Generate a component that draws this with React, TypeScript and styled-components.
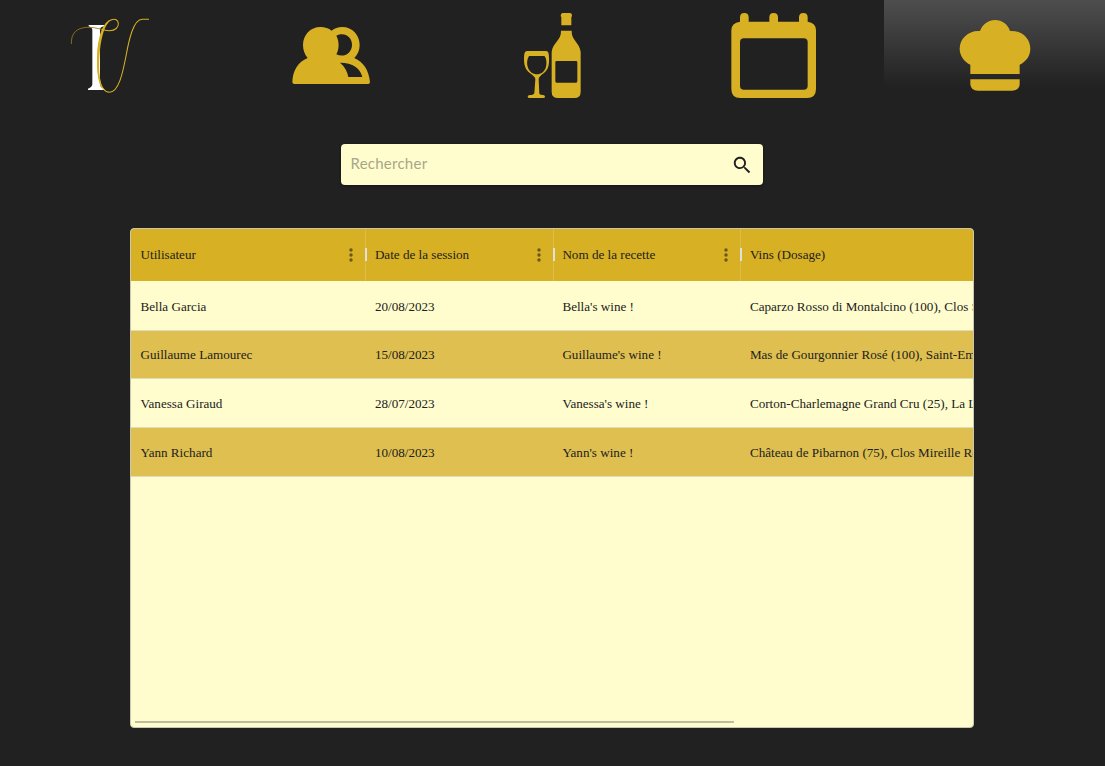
import React from "react";
import styled, { createGlobalStyle } from "styled-components";

const GOLD = "#d8b023";
const CREAM = "#fffdce";
const DARK = "#212121";

const GlobalStyle = createGlobalStyle`
  * { box-sizing: border-box; }
  body { margin: 0; background: ${DARK}; overflow: hidden; }
`;

const Page = styled.div`
  width: 100%;
  height: 766px;
  display: flex;
  flex-direction: column;
  align-items: center;
  background: ${DARK};
  font-family: "Liberation Serif", "Times New Roman", serif;
`;

const Nav = styled.nav`
  width: 100%;
  height: 110px;
  display: grid;
  grid-template-columns: repeat(5, 1fr);
`;

const NavItem = styled.a<{ $active?: boolean }>`
  display: flex;
  align-items: flex-start;
  justify-content: center;
  padding-top: 5px;
  padding-right: 1px;
  background: ${(p) => (p.$active ? `linear-gradient(180deg, #4e4e4e 0, ${DARK} 87px)` : "none")};
`;

const NavIcon = styled.svg`
  width: 100px;
  height: 100px;
  fill: ${GOLD};
`;

const SearchBox = styled.div`
  width: 422px;
  height: 41px;
  margin-top: 34.4px;
  margin-right: 1px;
  padding: 0 12px 0 9.5px;
  display: flex;
  align-items: center;
  justify-content: space-between;
  background: ${CREAM};
  border-radius: 4px;
  box-shadow: 0 1px 3px rgba(0, 0, 0, 0.4);
`;

const SearchInput = styled.input`
  flex: 1;
  min-width: 0;
  padding: 0 0 3px;
  border: 0;
  outline: 0;
  background: transparent;
  font: 400 15px Lato, sans-serif;
  letter-spacing: 0.25px;
  &::placeholder { color: #a9a688; opacity: 1; }
`;

const SearchIcon = styled.svg`
  width: 22.5px;
  height: 22.5px;
  margin-right: -2px;
  fill: ${DARK};
`;

const Grid = styled.section`
  width: 843.75px;
  height: 500px;
  margin-top: 42.6px;
  margin-right: 1px;
  display: flex;
  flex-direction: column;
  border: 1px solid #c9c6b4;
  border-radius: 4px;
  overflow: hidden;
  background: ${CREAM};
  color: ${DARK};
  font-size: 13.125px;
`;

const Row = styled.div<{ $header?: boolean; $tinted?: boolean }>`
  width: 1030px;
  flex: none;
  height: ${(p) => (p.$header ? "52px" : "48.75px")};
  margin-bottom: ${(p) => (p.$header ? "0.8px" : "0")};
  display: grid;
  grid-template-columns: 234.375px 187.5px 187.5px 420px;
  background: ${(p) => (p.$header ? GOLD : p.$tinted ? "#dfbf4f" : CREAM)};
  border-bottom: ${(p) => (p.$header ? "0" : "1px solid #e0dbb9")};
`;

const Cell = styled.div`
  padding: 2px 9.4px 0;
  display: flex;
  align-items: center;
  white-space: nowrap;
`;

const HeaderCell = styled(Cell)<{ $divided?: boolean }>`
  justify-content: space-between;
  padding: 0 0 0 9.4px;
  margin-right: -0.6px;
  border-right: ${(p) => (p.$divided ? "1px solid #dfbd4b" : "0")};
`;

const HeaderTools = styled.span`
  display: flex;
  align-items: center;
  gap: 12px;
  margin-right: -2px;
`;

const Dots = styled.svg`
  width: 4px;
  height: 14px;
  fill: #6a5618;
`;

const Separator = styled.span`
  width: 2px;
  height: 13px;
  background: #e0e0e0;
`;

const Filler = styled.div`
  flex: 1;
`;

const ScrollThumb = styled.div`
  width: 599px;
  height: 2px;
  flex: none;
  margin: 0 0 4px 4px;
  background: #bfbd9d;
`;

const headers = ["Utilisateur", "Date de la session", "Nom de la recette", "Vins (Dosage)"];

const sessions = [
  ["Bella Garcia", "20/08/2023", "Bella's wine !", "Caparzo Rosso di Montalcino (100), Clos Saint-Jean (50)"],
  ["Guillaume Lamourec", "15/08/2023", "Guillaume's wine !", "Mas de Gourgonnier Rosé (100), Saint-Emilion (50)"],
  ["Vanessa Giraud", "28/07/2023", "Vanessa's wine !", "Corton-Charlemagne Grand Cru (25), La Londe (75)"],
  ["Yann Richard", "10/08/2023", "Yann's wine !", "Château de Pibarnon (75), Clos Mireille Rosé (50)"],
];

export default function App() {
  return (
    <Page>
      <GlobalStyle />
      <Nav>
        <NavItem>
          <NavIcon viewBox="0 0 300 300">
            <path fill="#fff" d="M86 60H132V64Q120 66 120 74V238Q120 247 132 251V255H84V251Q97 247 97 237V76Q97 67 86 64Z" />
            <path fill="none" stroke="#94791f" strokeWidth="2.6" d="M34 117C33 83 51 69 80 67C98 66 112 70 124 73" />
            <path fill="none" stroke={GOLD} strokeWidth="3.2" d="M124 73C133 75 140 77 149 77C166 77 176 67 175 55C174 44 165 41 155 44C134 50 121 86 115 134C109 190 116 260 148 262C176 262 188 205 198 153C207 104 220 43 247 43H267" />
            <path d="M155 43C128 51 117 89 112 134C109 180 112 235 128 252C117 223 115 179 120 134C125 91 135 57 155 43Z" />
          </NavIcon>
        </NavItem>
        <NavItem>
          <NavIcon viewBox="3 -15 300 300">
            <path fillRule="evenodd" d="M121 51C135 51 146 55 155 62C164 55 174 51 187 51C217 51 239 75 239 105C239 121 233 134 223 144C250 156 267 181 270 216Q270 222 264 222H43Q37 222 37 216C38 182 54 156 83 144C74 134 69 120 69 105C69 75 91 51 121 51ZM169 77C178 94 178 117 169 133C191 144 216 130 216 104C216 79 192 65 169 77ZM180 158C194 169 202 184 205 201H247C241 175 219 158 180 158Z" />
          </NavIcon>
        </NavItem>
        <NavItem>
          <NavIcon viewBox="-24 0 300 300">
            <path fillRule="evenodd" d="M51 138H109Q115 138 116 146C119 171 117 190 106 200C97 208 86 214 86 223L88 266Q90 270 100 270Q106 271 105 277Q104 279 99 279H59Q53 279 53 275Q53 270 60 270Q71 270 73 264L76 223C76 214 64 208 55 200C44 190 40 171 43 146Q44 138 51 138ZM57 153C51 162 50 176 53 185C61 215 101 215 108 185C111 173 109 158 103 153Z" />
            <path d="M157 24H181Q187 25 186 33L184 37V61H154V37L152 33Q152 25 157 24Z" />
            <path fillRule="evenodd" d="M153 77H185C184 107 209 112 212 141V260Q212 279 193 279H144Q125 279 125 260V141C128 112 154 107 153 77ZM140 168Q136 168 136 172V229Q136 233 140 233H198Q202 233 202 229V172Q202 168 198 168Z" />
          </NavIcon>
        </NavItem>
        <NavItem>
          <NavIcon viewBox="9 0 300 300">
            <path fillRule="evenodd" d="M60 50V37Q60 24 73 24Q86 24 86 37V50H148V37Q148 24 161 24Q174 24 174 37V50H237V37Q237 24 250 24Q263 24 263 37V50Q288 53 288 76V252Q288 279 261 279H61Q34 279 34 252V76Q34 53 60 50ZM72 100Q60 100 60 112V242Q60 254 72 254H251Q263 254 263 242V112Q263 100 251 100Z" />
          </NavIcon>
        </NavItem>
        <NavItem $active>
          <NavIcon viewBox="222 15 300 300">
            <path d="M301 222V194C281 184 269 166 269 146C269 115 297 90 330 93C338 72 355 60 375 60C396 60 414 73 420 93C454 90 481 115 481 146C481 167 469 184 449 194V222Z" />
            <path d="M301 238H449V253Q447 272 427 272H323Q303 272 301 253Z" />
          </NavIcon>
        </NavItem>
      </Nav>

      <SearchBox>
        <SearchInput placeholder="Rechercher" />
        <SearchIcon viewBox="0 0 24 24">
          <path d="M15.5 14h-.79l-.28-.27C15.41 12.59 16 11.11 16 9.5 16 5.91 13.09 3 9.5 3S3 5.91 3 9.5 5.91 16 9.5 16c1.61 0 3.09-.59 4.23-1.57l.27.28v.79l5 4.99L20.49 19l-4.99-5zm-6 0C7.01 14 5 11.99 5 9.5S7.01 5 9.5 5 14 7.01 14 9.5 11.99 14 9.5 14z" />
        </SearchIcon>
      </SearchBox>

      <Grid>
        <Row $header>
          {headers.map((label, i) => (
            <HeaderCell key={label} $divided={i < 3}>
              {label}
              {i < 3 && (
                <HeaderTools>
                  <Dots viewBox="0 0 4 14">
                    <circle cx="2" cy="2" r="1.7" />
                    <circle cx="2" cy="7" r="1.7" />
                    <circle cx="2" cy="12" r="1.7" />
                  </Dots>
                  <Separator />
                </HeaderTools>
              )}
            </HeaderCell>
          ))}
        </Row>
        {sessions.map((session, i) => (
          <Row key={session[0]} $tinted={i % 2 === 1}>
            {session.map((value) => (
              <Cell key={value}>{value}</Cell>
            ))}
          </Row>
        ))}
        <Filler />
        <ScrollThumb />
      </Grid>
    </Page>
  );
}
